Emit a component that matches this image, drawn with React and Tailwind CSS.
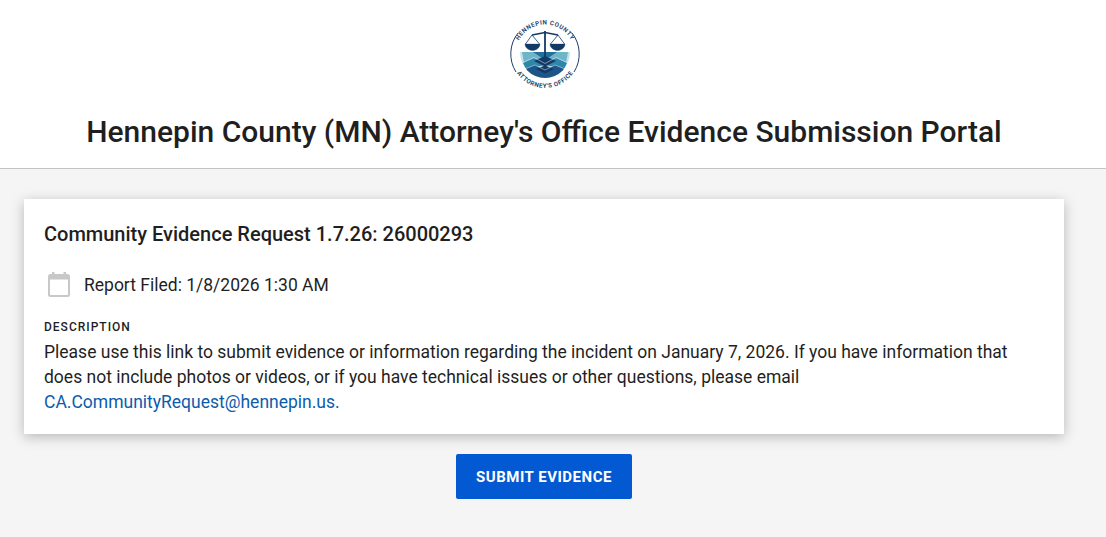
const Logo = () => (
  <svg width="80" height="80" viewBox="-1 0 80 80" className="block">
    <defs>
      <path id="topArc" d="M 10.5 39 A 29.5 29.5 0 0 1 69.5 39" />
      <path id="bottomArc" d="M 6 39 A 34 34 0 0 0 74 39" />
      <clipPath id="bowl">
        <path d="M 15 37 H 65 A 25 26 0 0 1 15 37 Z" />
      </clipPath>
    </defs>
    {/* outer ring, broken where the lettering sits */}
    <path d="M 13 18 A 34 34 0 0 0 11 57" fill="none" stroke="#1d3f66" strokeWidth="1" />
    <path d="M 67 18 A 34 34 0 0 1 69 57" fill="none" stroke="#1d3f66" strokeWidth="1" />
    <text fontSize="6.2" fontWeight="700" fill="#24476e" letterSpacing="0.55" fontFamily="Roboto, sans-serif">
      <textPath href="#topArc" startOffset="50%" textAnchor="middle">HENNEPIN COUNTY</textPath>
    </text>
    <text fontSize="6.2" fontWeight="700" fill="#24476e" letterSpacing="0.5" fontFamily="Roboto, sans-serif">
      <textPath href="#bottomArc" startOffset="50%" textAnchor="middle">ATTORNEY'S OFFICE</textPath>
    </text>
    <g clipPath="url(#bowl)">
      <rect x="14" y="37" width="52" height="28" fill="#c4e2ea" />
      <path d="M 17 37 H 63 L 61 48 L 40 44 L 19 48 Z" fill="#6fb5c9" />
      <path d="M 28 37 H 52 L 40 45 Z" fill="#236f9c" />
      <path d="M 18 48 L 29 43 L 40 49 L 51 43 L 62 48 L 59 54 L 40 50 L 21 54 Z" fill="#2f86ad" />
      <path d="M 29 46 L 40 41 L 51 46 L 40 51.5 Z" fill="#123a66" />
      <path d="M 20 54 L 30 50 L 40 55 L 50 50 L 60 54 L 56 66 H 24 Z" fill="#1c5688" />
      <path d="M 31 54 L 40 50.5 L 49 54 L 40 58.5 Z" fill="#123a66" />
    </g>
    {/* white crests across the water */}
    <g clipPath="url(#bowl)" fill="none" stroke="#ffffff" strokeWidth="0.45">
      <path d="M 17 48 L 29 42.5 L 40 48.5 L 51 42.5 L 63 48" />
      <path d="M 20 54 L 30 50 L 40 55 L 50 50 L 60 54" />
    </g>
    {/* scales */}
    <g fill="#123a66" stroke="#123a66">
      <path d="M 40 16 V 47" strokeWidth="1.8" fill="none" />
      <path d="M 27 20 L 40 17.5 L 53 20" strokeWidth="1.6" fill="none" />
      <path d="M 27 20 L 20.5 29 M 27 20 L 34.5 29 M 53 20 L 45.5 29 M 53 20 L 59.5 29" strokeWidth="0.8" fill="none" />
      <path d="M 20 29 H 35 C 35 33 31 35.5 27.5 35.5 C 24 35.5 20 33 20 29 Z" strokeWidth="0.3" />
      <path d="M 45 29 H 60 C 60 33 56 35.5 52.5 35.5 C 49 35.5 45 33 45 29 Z" strokeWidth="0.3" />
    </g>
  </svg>
)

const CalendarIcon = () => (
  <svg width="30" height="30" viewBox="0 0 30 30" className="block">
    <path
      fillRule="evenodd"
      fill="#c8c8c8"
      d="M6.5 4h1.5V2h2.5v2h9V2H22v2h1.5a2.5 2.5 0 0 1 2.5 2.5v18a2.5 2.5 0 0 1-2.5 2.5h-17A2.5 2.5 0 0 1 4 24.5v-18A2.5 2.5 0 0 1 6.5 4Zm-.5 5.5V24a1 1 0 0 0 1 1h16a1 1 0 0 0 1-1V9.5Z"
    />
  </svg>
)

function App() {
  return (
    <div className="min-h-screen bg-[#f5f5f5] font-['Roboto',sans-serif] text-[#1f1f1f]">
      <header className="h-[169px] bg-white border-b border-[#c4c4c4] flex flex-col items-center pt-[15px] pr-[18px]">
        <Logo />
        <h1 className="mt-[17px] text-[30px] leading-[40px] font-medium">
          Hennepin County (MN) Attorney's Office Evidence Submission Portal
        </h1>
      </header>

      <main className="pl-6 pr-[42px] pt-[30px]">
        <section className="bg-white h-[235px] px-5 pt-[22px] shadow-[0_3px_12px_rgba(0,0,0,0.25)]">
          <h2 className="text-xl leading-[26px] font-medium">Community Evidence Request 1.7.26: 26000293</h2>

          <div className="mt-[23px] flex items-center gap-[10px]">
            <CalendarIcon />
            <span className="text-[17.5px] leading-[30px]">Report Filed: 1/8/2026 1:30 AM</span>
          </div>

          <div className="mt-[19px] text-xs leading-4 font-medium tracking-[1px]">DESCRIPTION</div>
          <p className="mt-[5px] text-[17.5px] leading-[25px]">
            Please use this link to submit evidence or information regarding the incident on January 7, 2026. If you have information that does not include photos or videos, or if you have technical issues or other questions, please email{" "}
            <a href="#" className="text-[#0b5cad]">CA.CommunityRequest@hennepin.us.</a>
          </p>
        </section>

        <div className="flex justify-center mt-5">
          <button className="w-[176px] h-[45px] pt-px rounded-[2px] bg-[#0359d2] text-white text-[15px] font-bold tracking-[0.5px]">
            SUBMIT EVIDENCE
          </button>
        </div>
      </main>
    </div>
  )
}

export default App
